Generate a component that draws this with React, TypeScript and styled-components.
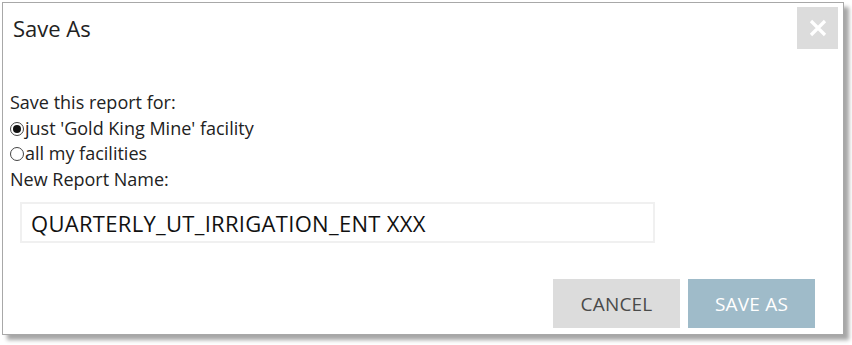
import React, { useState } from 'react';
import styled, { createGlobalStyle } from 'styled-components';

const GlobalStyle = createGlobalStyle`
  html, body {
    margin: 0;
    padding: 0;
    background: #ffffff;
  }
  body {
    font-family: 'Open Sans', 'Noto Sans', sans-serif;
    color: #222222;
  }
`;

const options = [
  { id: 'one', label: "just 'Gold King Mine' facility" },
  { id: 'all', label: 'all my facilities' },
];

const App = () => {
  const [scope, setScope] = useState('one');
  const [name, setName] = useState('QUARTERLY_UT_IRRIGATION_ENT XXX');

  return (
    <>
      <GlobalStyle />
      <Page>
        <Dialog>
          <Header>
            <Title>Save As</Title>
            <CloseButton aria-label="Close">
              <svg width="18" height="18" viewBox="0 0 18 18">
                <path d="M2 2 L16 16 M16 2 L2 16" stroke="#ffffff" strokeWidth="3.2" />
              </svg>
            </CloseButton>
          </Header>
          <Body>
            <Line>Save this report for:</Line>
            {options.map((o) => (
              <RadioRow key={o.id} onClick={() => setScope(o.id)}>
                <Radio $checked={scope === o.id} />
                {o.label}
              </RadioRow>
            ))}
            <Line>New Report Name:</Line>
            <NameInput value={name} onChange={(e) => setName(e.target.value)} />
          </Body>
          <Footer>
            <Button $variant="cancel">CANCEL</Button>
            <Button $variant="save">SAVE AS</Button>
          </Footer>
        </Dialog>
      </Page>
    </>
  );
};

export default App;

const Page = styled.div`
  width: 852px;
  height: 345px;
  padding: 2px 0 0 2px;
  box-sizing: border-box;
`;

const Dialog = styled.div`
  width: 842px;
  height: 333px;
  box-sizing: border-box;
  border: 1px solid #a8a8a8;
  background: #ffffff;
  box-shadow: 5px 5px 4px rgba(0, 0, 0, 0.35);
  display: flex;
  flex-direction: column;
`;

const Header = styled.div`
  display: flex;
  justify-content: space-between;
  align-items: flex-start;
  padding: 4px 5px 0 10px;
  height: 46px;
`;

const Title = styled.h2`
  margin: 6px 0 0;
  font-size: 22px;
  font-weight: 400;
  color: #222222;
`;

const CloseButton = styled.button`
  width: 41px;
  height: 42px;
  border: none;
  background: #dcdcdc;
  display: flex;
  align-items: center;
  justify-content: center;
  padding: 0;
  cursor: pointer;
`;

const Body = styled.div`
  padding: 37px 0 0 7px;
  display: flex;
  flex-direction: column;
  font-size: 18px;
`;

const Line = styled.div`
  line-height: 25.5px;
  height: 25.5px;
`;

const RadioRow = styled.label`
  display: flex;
  align-items: center;
  line-height: 25.5px;
  height: 25.5px;
  cursor: pointer;
`;

const Radio = styled.span<{ $checked: boolean }>`
  width: 12px;
  height: 12px;
  border: 1px solid #444444;
  border-radius: 50%;
  box-sizing: content-box;
  margin: 1px 1px 0 0;
  position: relative;
  &::after {
    content: '';
    display: ${(p) => (p.$checked ? 'block' : 'none')};
    position: absolute;
    left: 2px;
    top: 2px;
    width: 8px;
    height: 8px;
    border-radius: 50%;
    background: #111111;
  }
`;

const NameInput = styled.input`
  margin: 10px 0 0 10px;
  width: 635px;
  height: 41px;
  box-sizing: border-box;
  border: 2px solid #f0f0f0;
  padding: 0 9px;
  font-family: 'Open Sans', 'Noto Sans', sans-serif;
  font-size: 22px;
  letter-spacing: 0.3px;
  color: #111111;
  outline: none;
`;

const Footer = styled.div`
  margin-top: auto;
  display: flex;
  justify-content: flex-end;
  gap: 8px;
  padding: 0 28px 6px 0;
`;

const Button = styled.button<{ $variant: 'cancel' | 'save' }>`
  width: 127px;
  height: 49px;
  border: none;
  font-family: 'Open Sans', 'Noto Sans', sans-serif;
  font-size: 19px;
  font-weight: 500;
  letter-spacing: 0.2px;
  background: ${(p) => (p.$variant === 'save' ? '#9fbbc9' : '#dcdcdc')};
  color: ${(p) => (p.$variant === 'save' ? '#ffffff' : '#4a4a4a')};
  cursor: pointer;
`;
